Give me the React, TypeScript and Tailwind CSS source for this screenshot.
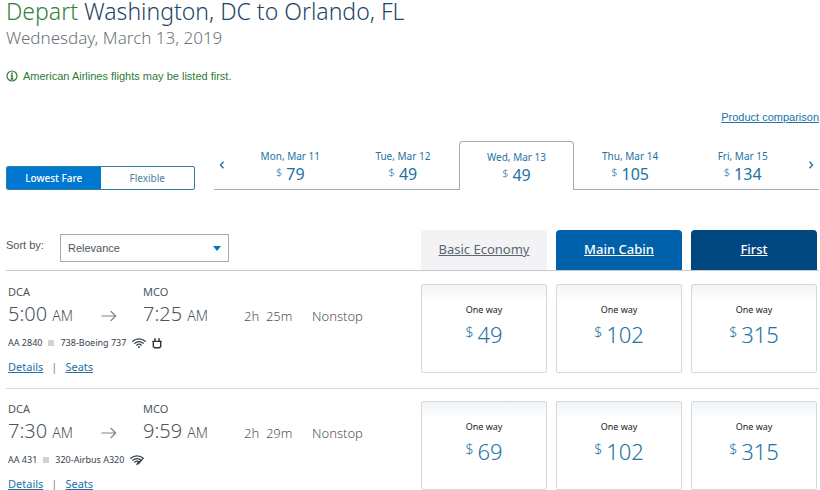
import { useState } from "react"
import clsx from "clsx"

interface Flight {
  number: string
  aircraft: string
  departs: string
  arrives: string
  duration: string
  amenities: ("wifi" | "fastWifi" | "power")[]
  fares: number[]
}

const days = [
  { label: "Mon, Mar 11", price: 79 },
  { label: "Tue, Mar 12", price: 49 },
  { label: "Wed, Mar 13", price: 49 },
  { label: "Thu, Mar 14", price: 105 },
  { label: "Fri, Mar 15", price: 134 },
]

const flights: Flight[] = [
  {
    number: "AA 2840",
    aircraft: "738-Boeing 737",
    departs: "5:00",
    arrives: "7:25",
    duration: "2h  25m",
    amenities: ["wifi", "power"],
    fares: [49, 102, 315],
  },
  {
    number: "AA 431",
    aircraft: "320-Airbus A320",
    departs: "7:30",
    arrives: "9:59",
    duration: "2h  29m",
    amenities: ["fastWifi"],
    fares: [69, 102, 315],
  },
]

const cabins = [
  { name: "Basic Economy", style: "bg-[#f3f3f5] text-[#5b6670]" },
  { name: "Main Cabin", style: "bg-[#0061ab] font-medium text-white" },
  { name: "First", style: "bg-[#00467f] font-medium text-white" },
]

function InfoIcon() {
  return (
    <svg viewBox="0 0 12 12" className="h-3 w-3" fill="none" stroke="#2f7a35" aria-hidden="true">
      <circle cx="6" cy="6" r="5" strokeWidth="1.2" />
      <path d="M6 2.4v1.5M4.8 5.2H6v3.6M4.6 9h2.8" strokeWidth="1.5" />
    </svg>
  )
}

function WifiIcon({ fast = false }: { fast?: boolean }) {
  return (
    <svg viewBox="0 0 14 10" className="h-2.5 w-3.5" fill="none" stroke="#36424c" strokeLinecap="round" aria-label="Wi-Fi">
      <path d="M.8 3.3C4.3 0 9.7 0 13.2 3.3" strokeWidth="1.3" />
      <path d="M2.8 5.3C5.2 3 8.8 3 11.2 5.3" strokeWidth="1.2" />
      <path d="M4.7 7.2C6 6 8 6 9.3 7.2" strokeWidth="1.2" />
      {fast ? (
        <path d="M6.6 9.5 7.4 7.8 13.2 3.4 9.2 8.6Z" fill="#2b343c" stroke="#2b343c" strokeWidth=".6" />
      ) : (
        <circle cx="7" cy="8.9" r="1" fill="#36424c" stroke="none" />
      )}
    </svg>
  )
}

function PowerIcon() {
  return (
    <svg viewBox="0 0 10 11" className="h-[11px] w-2.5" fill="none" stroke="#2b343c" aria-label="Power outlet">
      <path d="M3 .3v2.7M7 .3v2.7" strokeWidth="1.5" />
      <path d="M.3 3.4h9.4M1.3 3.4v5l1.2 1.4h5l1.2-1.4v-5" strokeWidth="1.4" />
    </svg>
  )
}

function ArrowIcon() {
  return (
    <svg viewBox="0 0 16 12" className="h-3 w-4" fill="none" stroke="#7b858d" strokeWidth="1.2" aria-hidden="true">
      <path d="M.5 6h14M9.7 1l5 5-5 5" />
    </svg>
  )
}

function Chevron({ flip = false }: { flip?: boolean }) {
  return (
    <svg viewBox="0 0 6 8" className={clsx("h-2 w-1.5", flip && "rotate-180")} fill="none" stroke="#2272a5" aria-hidden="true">
      <path d="M4.5 .8 1.5 4l3 3.2" strokeWidth="1.4" />
    </svg>
  )
}

function Time({ code, value }: { code: string; value: string }) {
  return (
    <div className="text-[#4d565e]">
      <p className="text-[11px] leading-4">{code}</p>
      <p className="mt-0.5 text-xl leading-6 font-light whitespace-nowrap">
        {value} <span className="text-sm">AM</span>
      </p>
    </div>
  )
}

function FlightRow({ flight }: { flight: Flight }) {
  return (
    <li className="flex items-start border-b border-[#d3d7da] pt-3 pr-0.5 pb-[13px] last:border-b-0 last:pb-0">
      <div className="min-w-0 flex-1 pl-0.5">
        <div className="flex">
          <div className="w-[93px]">
            <Time code="DCA" value={flight.departs} />
          </div>
          <div className="flex w-[42px] items-end pb-1">
            <ArrowIcon />
          </div>
          <div className="w-[101px]">
            <Time code="MCO" value={flight.arrives} />
          </div>
          <p className="w-[68px] self-end text-[13px] leading-5 font-light whitespace-pre text-[#4d565e]">{flight.duration}</p>
          <p className="self-end text-[13px] leading-5 font-light text-[#4d565e]">Nonstop</p>
        </div>
        <div className="mt-[9px] flex items-center gap-1.5 text-[9px] leading-4 text-[#36424c]">
          <span>{flight.number}</span>
          <span className="h-1.5 w-1.5 bg-[#ccd3d9]" />
          <span>{flight.aircraft}</span>
          {flight.amenities.map((amenity) =>
            amenity === "power" ? <PowerIcon key={amenity} /> : <WifiIcon key={amenity} fast={amenity === "fastWifi"} />
          )}
        </div>
        <div className="mt-2 flex gap-2 text-[11px] leading-4 text-[#2272a5]">
          <a href="#details" className="underline">Details</a>
          <span className="text-[#7b858d]">|</span>
          <a href="#seats" className="underline">Seats</a>
        </div>
      </div>
      <div className="grid w-[396px] grid-cols-3 gap-[9px]">
        {flight.fares.map((fare, i) => (
          <button
            key={cabins[i].name}
            className="flex h-[89px] flex-col items-center rounded-xs border border-[#d3dade] bg-linear-to-b from-[#f1f4f6] to-white to-20% pt-[17px]"
          >
            <span className="text-[9px] leading-4 text-[#222222]">One way</span>
            <span className="mt-0.5 flex gap-1 text-[22px] leading-7 font-light text-[#2272a5]">
              <span className="text-sm leading-6">$</span>
              {fare}
            </span>
          </button>
        ))}
      </div>
    </li>
  )
}

export default function App() {
  const [flexible, setFlexible] = useState(false)
  const [day, setDay] = useState(2)

  return (
    <main className="bg-white pr-px pl-1.5 font-['Noto_Sans',sans-serif]">
      <h1 className="text-[23px] leading-[22px] font-light text-[#1f4468]">
        <span className="text-[#35803a]">Depart</span> Washington, DC to Orlando, FL
      </h1>
      <p className="mt-1 text-[17px] leading-6 font-light text-[#6b747b]">Wednesday, March 13, 2019</p>

      <p className="mt-[18px] flex items-center gap-[5px] font-['Liberation_Sans',sans-serif] text-[11px] leading-4 text-[#2f7a35]">
        <InfoIcon />
        American Airlines flights may be listed first.
      </p>

      <div className="mt-[25px] flex justify-end font-['Liberation_Sans',sans-serif] text-[11px] leading-4">
        <a href="#compare" className="text-[#2272a5] underline">Product comparison</a>
      </div>

      <div className="mt-4 flex items-end">
        <div className="mr-[19px] flex h-6 w-[189px] overflow-hidden rounded-xs border border-[#2e7f9d] text-[10px]">
          <button
            aria-pressed={!flexible}
            onClick={() => setFlexible(false)}
            className={clsx("flex-1", flexible ? "text-[#4a80a3]" : "bg-[#0078d2] font-medium text-white")}
          >
            Lowest Fare
          </button>
          <button
            aria-pressed={flexible}
            onClick={() => setFlexible(true)}
            className={clsx("flex-1", flexible ? "bg-[#0078d2] font-medium text-white" : "text-[#4a80a3]")}
          >
            Flexible
          </button>
        </div>

        <div className="flex h-[49px] flex-1">
          <button aria-label="Earlier dates" className="flex w-5 items-center border-b border-[#a3abb1] pl-[5px]">
            <Chevron />
          </button>
          {days.map((d, i) => (
            <button
              key={d.label}
              onClick={() => setDay(i)}
              className={clsx(
                "flex w-0 flex-1 flex-col items-center pt-[7px] text-[#2272a5]",
                i === day ? "rounded-t-sm border border-b-0 border-[#a3abb1]" : "border-b border-[#a3abb1]"
              )}
            >
              <span className="text-[10px] leading-4">{d.label}</span>
              <span className="flex gap-1 text-base leading-5">
                <span className="text-[11px] leading-4 font-light">$</span>
                {d.price}
              </span>
            </button>
          ))}
          <button aria-label="Later dates" className="flex w-5 items-center justify-end border-b border-[#a3abb1] pr-[5px]">
            <Chevron flip />
          </button>
        </div>
      </div>

      <div className="mt-10 flex border-b border-[#c5cacd] pr-0.5">
        <div className="flex flex-1 items-start pt-1 font-['Liberation_Sans',sans-serif] text-[11px] text-[#4d565e]">
          <label htmlFor="sort" className="w-[54px] pt-[3px] leading-4">Sort by:</label>
          <div className="relative w-[169px]">
            <select id="sort" className="h-7 w-full appearance-none border border-[#a3abb1] bg-white pl-[7px]">
              <option>Relevance</option>
              <option>Price</option>
              <option>Duration</option>
            </select>
            <svg viewBox="0 0 8 5" className="pointer-events-none absolute top-3 right-2 h-[5px] w-2" fill="#0076b6" aria-hidden="true">
              <path d="M0 0h8L4 5z" />
            </svg>
          </div>
        </div>
        <div className="grid w-[396px] grid-cols-3 gap-[9px]">
          {cabins.map((cabin) => (
            <a
              key={cabin.name}
              href="#cabin"
              className={clsx("flex h-10 items-center justify-center rounded-t-sm text-[13px] underline", cabin.style)}
            >
              {cabin.name}
            </a>
          ))}
        </div>
      </div>

      <ul className="pt-px">
        {flights.map((flight) => (
          <FlightRow key={flight.number} flight={flight} />
        ))}
      </ul>
    </main>
  )
}
